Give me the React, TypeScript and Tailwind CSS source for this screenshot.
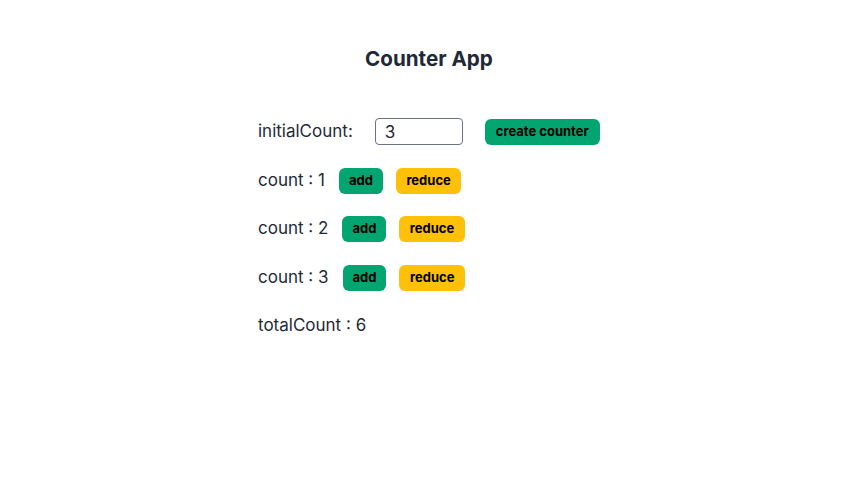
import React, { useState } from "react";

const rowMargins = ["mt-[23px]", "mt-[22px]", "mt-[23px]"];

export default function App() {
  const [initial, setInitial] = useState("3");
  const [counts, setCounts] = useState<number[]>([1, 2, 3]);
  const total = counts.reduce((a, b) => a + b, 0);
  return (
    <div className="min-h-[481px] bg-white text-[#1f2937]" style={{ fontFamily: "Inter, 'Noto Sans', sans-serif" }}>
      <div className="ml-[258px] w-max pt-[46px] whitespace-nowrap">
        <h1 className="text-center text-[20.6px] font-bold leading-[26px] text-[#1f2937]">Counter App</h1>
        <div className="mt-[46px] flex h-[27px] items-center">
          <span className="text-[17px]">initialCount:</span>
          <input
            value={initial}
            onChange={(e) => setInitial(e.target.value)}
            className="ml-[22px] h-[27px] w-[88px] shrink-0 rounded-[4px] border border-[#6b7280] px-[9px] text-[17px] outline-none"
          />
          <button
            className="ml-[22px] h-[26px] shrink-0 whitespace-nowrap rounded-[6px] bg-[#02a56f] px-[11px] text-[13px] font-bold text-black"
            onClick={() => setCounts(Array.from({ length: Number(initial) || 0 }, (_, i) => i + 1))}
          >
            create counter
          </button>
        </div>
        {counts.map((c, i) => (
          <div key={i} className={`${rowMargins[i % 3]} flex h-[26px] items-center`}>
            <span className="text-[17px]">count : {c}</span>
            <button
              className="ml-[14px] h-[26px] shrink-0 rounded-[6px] bg-[#02a56f] px-[10px] text-[13px] font-bold text-black"
              onClick={() => setCounts(counts.map((v, j) => (j === i ? v + 1 : v)))}
            >
              add
            </button>
            <button
              className="ml-[13px] h-[26px] shrink-0 rounded-[6px] bg-[#ffc107] px-[10.5px] text-[13px] font-bold text-black"
              onClick={() => setCounts(counts.map((v, j) => (j === i ? v - 1 : v)))}
            >
              reduce
            </button>
          </div>
        ))}
        <div className="mt-[22px] flex h-[26px] items-center text-[17px]">totalCount : {total}</div>
      </div>
    </div>
  );
}
